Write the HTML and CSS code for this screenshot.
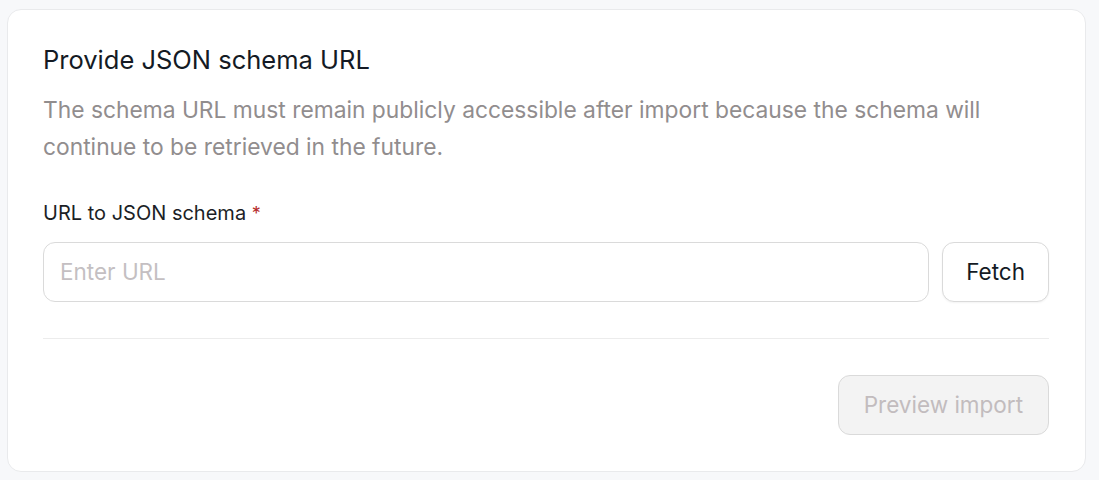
FILE: index.html
```html
<!DOCTYPE html>
<html>
<head>
<meta charset="utf-8">
<link rel="stylesheet" href="styles.css">
</head>
<body>
<div class="card">
  <h2 class="title">Provide JSON schema URL</h2>
  <p class="desc">The schema URL must remain publicly accessible after import because the schema will continue to be retrieved in the future.</p>
  <label class="label">URL to JSON schema <span class="req">*</span></label>
  <div class="row">
    <input class="input" type="text" placeholder="Enter URL">
    <button class="btn">Fetch</button>
  </div>
  <hr class="divider">
  <div class="footer">
    <button class="btn btn-disabled">Preview import</button>
  </div>
</div>
</body>
</html>
```
FILE: styles.css
```css
html, body { margin: 0; padding: 0; }
body {
  background: #f7f8fa;
  font-family: Inter, "Noto Sans", sans-serif;
  padding: 9px 13px 8px 7px;
  box-sizing: border-box;
  height: 480px;
}
.card {
  background: #fff;
  border: 1px solid #e9eaec;
  border-radius: 14px;
  padding: 34px 36px 36px 35px;
  box-sizing: border-box;
  height: 463px;
}
.title {
  margin: 0;
  font-size: 25.5px;
  font-weight: 400;
  color: #141a24;
  line-height: 32px;
}
.desc {
  margin: 14.5px 0 0;
  font-size: 22.8px;
  line-height: 37px;
  color: #918d8e;
  max-width: 960px;
}
.label {
  display: block;
  margin-top: 36px;
  font-size: 20px;
  line-height: 24px;
  color: #1c1f26;
}
.req { color: #b52a2a; font-size: 18px; }
.row {
  display: flex;
  gap: 13px;
  margin-top: 16px;
}
.input {
  flex: 1;
  min-width: 0;
  height: 60px;
  box-sizing: border-box;
  border: 1px solid #dadada;
  border-radius: 12px;
  padding: 0 16px;
  font-family: inherit;
  font-size: 22.5px;
  color: #1c1f26;
  outline: none;
}
.input::placeholder { color: #c4bfc2; }
.btn {
  height: 60px;
  box-sizing: border-box;
  border: 1px solid #dadada;
  border-radius: 12px;
  background: #fff;
  font-family: inherit;
  font-size: 22.5px;
  color: #141a24;
  padding: 0 23px;
  box-shadow: 0 1px 2px rgba(0,0,0,0.05);
}
.divider {
  border: none;
  border-top: 1px solid #ececec;
  margin: 36px 0 0;
}
.footer {
  display: flex;
  justify-content: flex-end;
  margin-top: 36px;
}
.btn-disabled {
  background: #f3f3f3;
  color: #c2bcbe;
  box-shadow: none;
  padding: 0 25px;
}
```
